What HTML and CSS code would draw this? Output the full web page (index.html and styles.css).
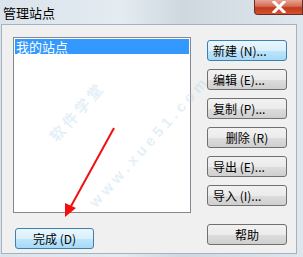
FILE: index.html
```html
<!DOCTYPE html>
<html lang="zh">
<head>
    <meta charset="UTF-8">
    <link rel="stylesheet" href="styles.css">
</head>
<body>

    <div class="window">
        <!-- Barra de título -->
        <div class="titlebar">
            <span class="title">管理站点</span>
            <div class="close-btn">
                <svg width="16" height="12" viewBox="0 0 16 12">
                    <path d="M3 1 L13 11 M13 1 L3 11" stroke="#fff" stroke-width="3" stroke-linecap="square"/>
                </svg>
            </div>
        </div>

        <div class="client">
            <div class="left-col">
                <div class="listbox">
                    <div class="list-item selected">我的站点</div>
                </div>
                <button class="btn btn-default">完成 (D)</button>
            </div>

            <div class="right-col">
                <button class="btn btn-hover">新建 (N)...</button>
                <button class="btn">编辑 (E)...</button>
                <button class="btn">复制 (P)...</button>
                <button class="btn btn-center">删除 (R)</button>
                <button class="btn">导出 (E)...</button>
                <button class="btn">导入 (I)...</button>
                <button class="btn btn-center btn-help">帮助</button>
            </div>
        </div>

        <!-- Marca de agua y flecha -->
        <div class="watermark wm-1">软 件 学 堂</div>
        <div class="watermark wm-2">w w w . x u e 5 1 . c o m</div>

        <svg class="arrow" width="303" height="257" viewBox="0 0 303 257">
            <line x1="114" y1="128" x2="70" y2="208" stroke="#f01010" stroke-width="2"/>
            <polygon points="65,217 65,203 76,208" fill="#f01010"/>
        </svg>
    </div>

</body>
</html>
```

FILE: styles.css
```css
body {
    margin: 0;
    padding: 0;
    font-family: "Noto Sans CJK SC", sans-serif;
}

.window {
    position: relative;
    width: 303px;
    height: 257px;
    overflow: hidden;
    background: linear-gradient(90deg, #dbe4ec 0%, #e4ebf1 40%, #cfd8df 60%, #dfe7ee 100%);
}

.titlebar {
    display: flex;
    justify-content: space-between;
    align-items: flex-start;
    height: 24px;
}

.title {
    font-size: 13px;
    line-height: 13px;
    color: #000;
    margin: 6px 0 0 3px;
}

.close-btn {
    width: 49px;
    height: 15px;
    border: 1px solid #6b2c23;
    border-top: none;
    border-radius: 0 0 0 4px;
    background: linear-gradient(#e8a493 0%, #d46c54 45%, #c2391c 55%, #d5522f 100%);
    display: flex;
    justify-content: center;
    align-items: center;
    box-sizing: border-box;
}

.client {
    display: flex;
    margin-left: 1px;
    width: 296px;
    height: 230px;
    box-sizing: border-box;
    border: 1px solid #a5b2bf;
    background-color: #f0f0f0;
}

.left-col {
    display: flex;
    flex-direction: column;
    padding: 12px 0 0 11px;
}

.listbox {
    width: 178px;
    height: 176px;
    box-sizing: border-box;
    border: 1px solid #828790;
    background-color: #fff;
    padding: 1px;
}

.list-item {
    font-size: 13px;
    line-height: 15px;
    height: 15px;
    padding-left: 1px;
}

.list-item.selected {
    background-color: #3399ff;
    color: #fff;
}

.right-col {
    display: flex;
    flex-direction: column;
    gap: 8px;
    padding: 15px 0 0 16px;
}

.btn {
    width: 80px;
    height: 21px;
    box-sizing: border-box;
    border: 1px solid #707070;
    border-radius: 3px;
    background: linear-gradient(#f2f2f2 0%, #ebebeb 50%, #dddddd 51%, #cfcfcf 100%);
    font-family: "Noto Sans CJK SC", sans-serif;
    font-size: 12px;
    line-height: 17px;
    color: #000;
    text-align: left;
    padding: 0 0 0 5px;
    margin: 0;
}

.btn-center {
    text-align: center;
    padding: 0;
}

.btn-hover {
    border-color: #3c7fb1;
    background: linear-gradient(#eaf6fd 0%, #d9f0fc 50%, #bee6fd 51%, #a7d9f5 100%);
}

.btn-default {
    margin-top: 15px;
    margin-left: 2px;
    width: 79px;
    text-align: center;
    padding: 0;
    border-color: #3c7fb1;
    background: linear-gradient(#eaf6fd 0%, #d9f0fc 50%, #bee6fd 51%, #a7d9f5 100%);
}

.btn-help {
    margin-top: 10px;
}

.watermark {
    position: absolute;
    color: #a9cfe8;
    opacity: 0.3;
    font-weight: bold;
    white-space: nowrap;
    pointer-events: none;
    transform-origin: left center;
}

.wm-1 {
    left: 52px;
    top: 128px;
    font-size: 15px;
    transform: rotate(-48deg);
}

.wm-2 {
    left: 92px;
    top: 196px;
    font-size: 15px;
    font-family: "Liberation Sans", sans-serif;
    transform: rotate(-48deg);
}

.arrow {
    position: absolute;
    left: 0;
    top: 0;
    pointer-events: none;
}
```
